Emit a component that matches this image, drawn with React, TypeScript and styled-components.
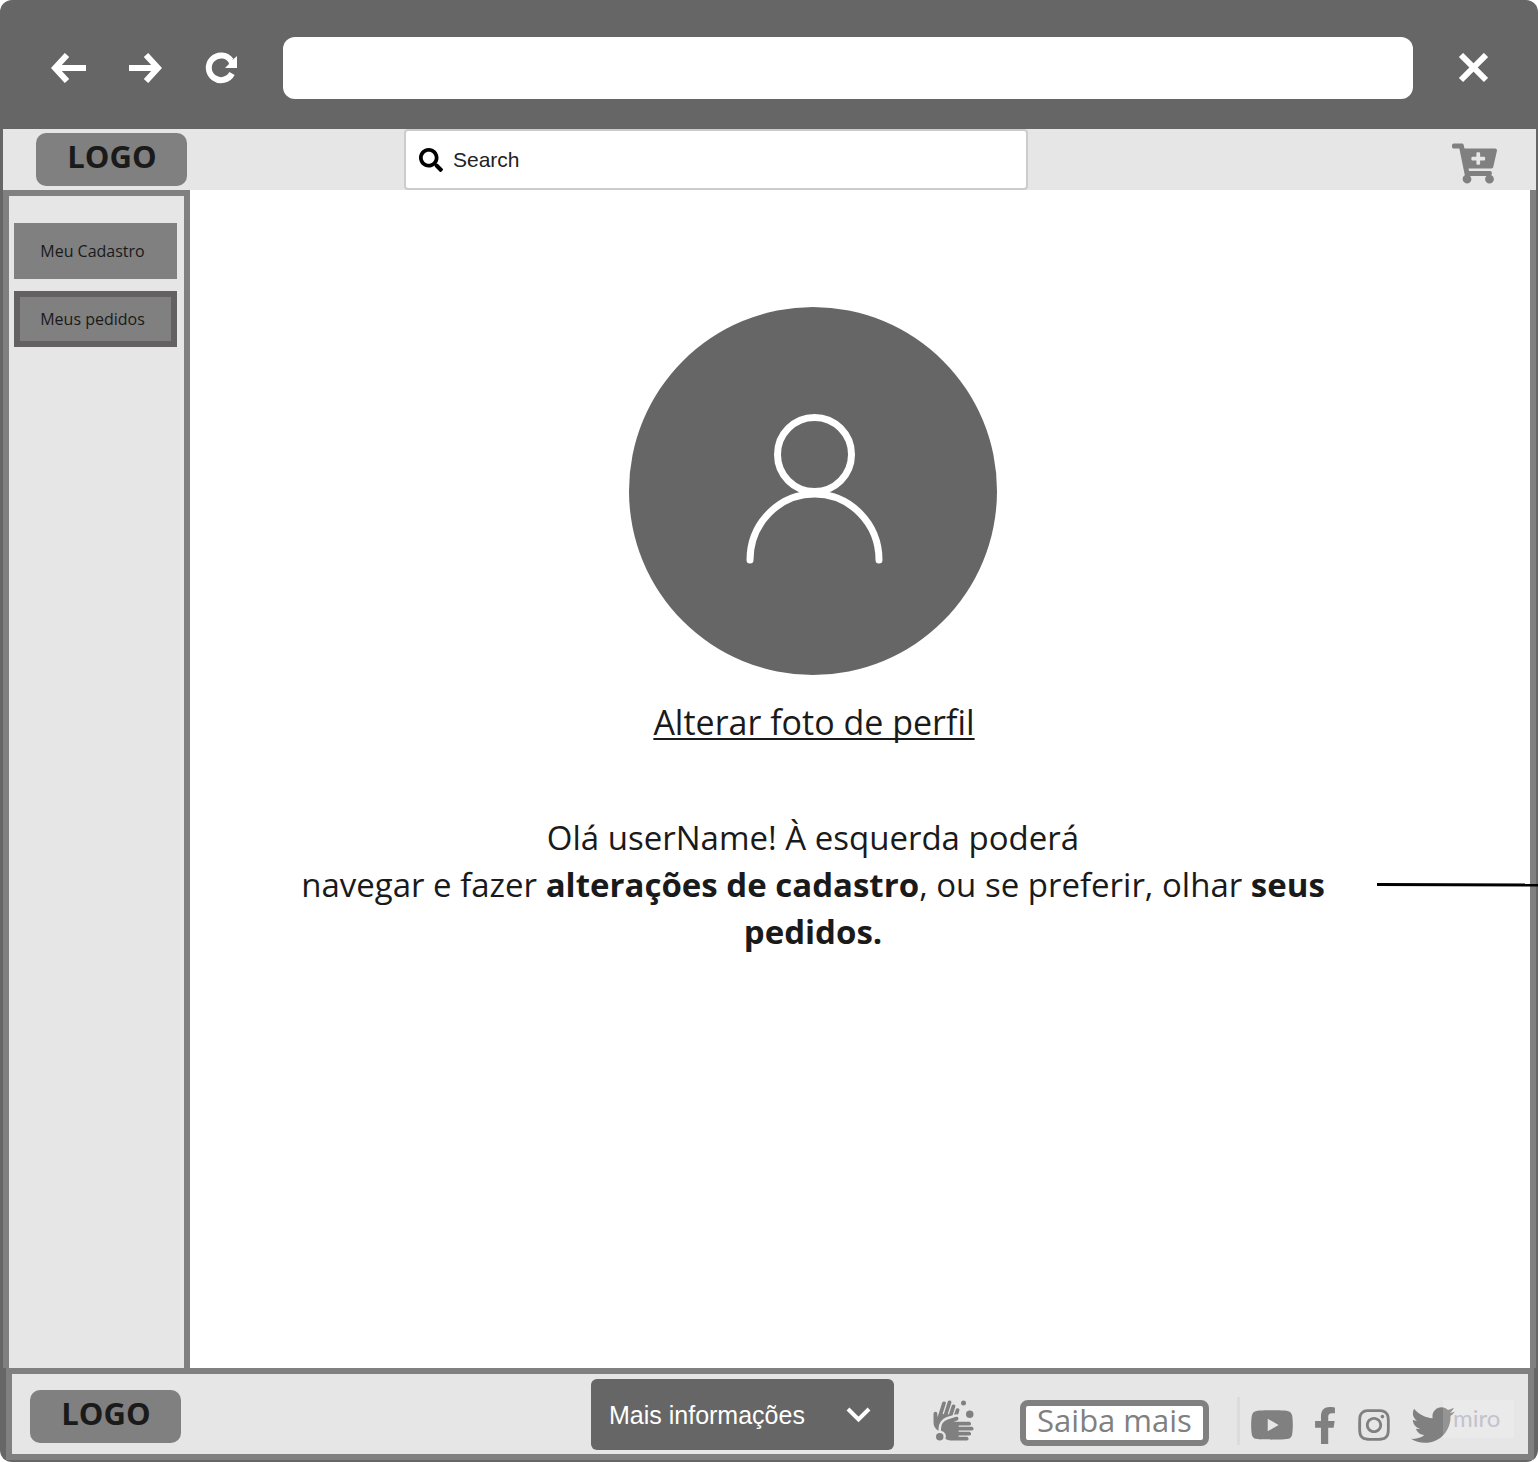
import React from 'react';
import styled, { createGlobalStyle } from 'styled-components';
import {
  FaCartPlus,
  FaFacebookF,
  FaHandsWash,
  FaInstagram,
  FaSearch,
  FaTwitter,
  FaYoutube,
} from 'react-icons/fa';

const color = {
  frame: '#666666',
  mid: '#808080',
  panel: '#e6e6e6',
  ink: '#1a1a1a',
  white: '#ffffff',
};

const openSans = "'Open Sans', 'Noto Sans', sans-serif";
const arial = "'Liberation Sans', Arial, sans-serif";

const GlobalStyle = createGlobalStyle`
  *, *::before, *::after { box-sizing: border-box; }
  body { margin: 0; background: ${color.white}; font-family: ${openSans}; color: ${color.ink}; }
  button, input, select { font: inherit; color: inherit; margin: 0; }
  button { cursor: pointer; }
  svg { display: block; flex: none; }
`;

const Frame = styled.div`
  display: flex;
  flex-direction: column;
  min-height: 100vh;
  padding: 0 2px 2px 3px;
  background: ${color.frame};
  border-radius: 12px;
  overflow: hidden;
`;

const BrowserBar = styled.div`
  display: flex;
  align-items: center;
  height: 129px;
  padding: 7px 35px 0 37px;
`;

const NavButtons = styled.div`
  display: flex;
  gap: 21px;
  margin-right: 33px;
`;

const IconButton = styled.button`
  display: flex;
  align-items: center;
  justify-content: center;
  flex: none;
  width: 56px;
  height: 56px;
  padding: 0;
  border: 0;
  background: none;
  color: ${color.white};
`;

const AddressInput = styled.input`
  flex: 1;
  min-width: 0;
  height: 62px;
  margin-right: 32px;
  padding: 0 20px;
  border: 0;
  border-radius: 12px;
  background: ${color.white};
  font-family: ${arial};
  font-size: 25px;
`;

const SiteHeader = styled.header`
  display: flex;
  align-items: center;
  height: 61px;
  padding: 0 39px 0 33px;
  background: ${color.panel};
`;

const Logo = styled.a`
  display: flex;
  align-items: center;
  justify-content: center;
  flex: none;
  width: 151px;
  height: 53px;
  padding: 0 0 8px 1px;
  border-radius: 10px;
  background: ${color.mid};
  color: ${color.ink};
  font-size: 31px;
  font-weight: 700;
  line-height: 40px;
  text-decoration: none;
`;

const SearchBox = styled.label`
  display: flex;
  align-items: center;
  gap: 10px;
  flex: 0 1 624px;
  height: 61px;
  margin: 0 auto 0 217px;
  padding: 0 13px;
  border: 2px solid #cccccc;
  border-radius: 4px;
  background: ${color.white};
  color: #000000;
`;

const SearchInput = styled.input`
  flex: 1;
  min-width: 0;
  padding: 0;
  border: 0;
  outline: 0;
  background: none;
  font-family: ${arial};
  font-size: 21px;
  line-height: 24px;
  &::placeholder { color: #222222; opacity: 1; }
`;

const CartLink = styled.a`
  margin-top: 8px;
  color: ${color.mid};
`;

const Body = styled.div`
  display: flex;
  flex: 1;
`;

const Sidebar = styled.nav`
  display: flex;
  flex-direction: column;
  gap: 12px;
  flex: none;
  width: 187px;
  padding: 27px 7px 0 5px;
  border: 6px solid ${color.mid};
  border-bottom: 0;
  background: ${color.panel};
`;

const SideButton = styled.button<{ $current?: boolean }>`
  height: 56px;
  padding: 0 6px 0 0;
  border: ${(p) => (p.$current ? '6px solid #636161' : '0')};
  background: ${color.mid};
  font-size: 16px;
`;

const Main = styled.main`
  position: relative;
  display: flex;
  flex-direction: column;
  align-items: center;
  flex: 1;
  padding: 117px 94px 40px 0;
  border-right: 6px solid ${color.mid};
  background: ${color.white};
`;

const Avatar = styled.div`
  display: flex;
  align-items: center;
  justify-content: center;
  width: 368px;
  height: 368px;
  padding: 0 0 6px 2px;
  border-radius: 50%;
  background: ${color.frame};
`;

const PhotoLink = styled.a`
  margin-top: 24px;
  padding-left: 2px;
  color: ${color.ink};
  font-size: 34px;
  line-height: 47px;
  text-decoration: underline;
  text-decoration-thickness: 2px;
  text-decoration-skip-ink: none;
  text-underline-offset: 3px;
`;

const Greeting = styled.p`
  max-width: 1060px;
  margin: 68px 0 0;
  font-size: 33px;
  line-height: 47px;
  text-align: center;
  b { font-weight: 700; }
`;

const Connector = styled.svg`
  position: absolute;
  right: -8px;
  top: 692px;
`;

const FooterEdge = styled.div`
  background: ${color.frame};
`;

const Footer = styled.footer`
  position: relative;
  display: flex;
  align-items: center;
  height: 92px;
  margin: 0 2px 0 3px;
  padding: 5px 73px 0 18px;
  border: 6px solid ${color.mid};
  background: ${color.panel};
`;

const InfoPicker = styled.label`
  display: grid;
  align-items: center;
  align-self: flex-start;
  flex: none;
  width: 303px;
  height: 71px;
  margin-left: auto;
  color: ${color.white};
  > * { grid-area: 1 / 1; }
  > svg { justify-self: end; margin-right: 23px; pointer-events: none; }
`;

const InfoSelect = styled.select`
  width: 100%;
  height: 71px;
  padding: 0 60px 0 18px;
  border: 0;
  border-radius: 6px;
  appearance: none;
  background: ${color.frame};
  font-family: ${arial};
  font-size: 25px;
`;

const HandsLink = styled.a`
  margin: 7px 44px 0 37px;
  color: ${color.mid};
`;

const MoreButton = styled.button`
  flex: none;
  width: 189px;
  height: 46px;
  margin-top: 13px;
  padding: 0 0 6px;
  border: 6px solid ${color.mid};
  border-radius: 8px;
  background: ${color.white};
  color: ${color.mid};
  font-size: 31px;
  line-height: 28px;
`;

const Socials = styled.div`
  display: flex;
  align-items: center;
  gap: 19px;
  height: 48px;
  margin: 9px 0 0 28px;
  padding: 8px 0 0 10px;
  border-left: 3px solid #dcdcda;
  color: ${color.mid};
  a { color: inherit; }
`;

const FacebookIcon = styled(FaFacebookF)`
  width: 24px;
  height: 37px;
`;

const Watermark = styled.span`
  position: absolute;
  right: 14px;
  top: 26px;
  width: 71px;
  height: 38px;
  padding-left: 10px;
  background: rgba(255, 255, 255, 0.16);
  color: #c3c2ce;
  font-family: Lato, sans-serif;
  font-size: 24px;
  line-height: 36px;
`;

const LeftArrowIcon = () => (
  <svg width="35" height="30" viewBox="0 0 35 30" fill="none" stroke="currentColor" strokeWidth="6">
    <path d="M16 2 4 15l12 13M4 15h31" />
  </svg>
);

const RightArrowIcon = () => (
  <svg width="33" height="30" viewBox="0 0 33 30" fill="none" stroke="currentColor" strokeWidth="6">
    <path d="m17 2 12 13-12 13M29 15H0" />
  </svg>
);

const ReloadIcon = () => (
  <svg width="34" height="34" viewBox="0 0 34 34">
    <path d="M27 22.5A12.3 12.3 0 1 1 26 9.5" fill="none" stroke="currentColor" strokeWidth="6" />
    <path d="M32 5V17H20l4-4-1-4 5-.5z" fill="currentColor" />
  </svg>
);

const CloseIcon = () => (
  <svg width="30" height="30" viewBox="0 0 30 30" stroke="currentColor" strokeWidth="6">
    <path d="m3 2 25 25M28 2 3 27" />
  </svg>
);

const PersonIcon = () => (
  <svg width="140" height="152" viewBox="0 0 140 152" fill="none" stroke="#ffffff" strokeWidth="7" strokeLinecap="round">
    <circle cx="70.5" cy="42.5" r="37" />
    <path d="M6 148a64.5 66 0 0 1 129 0" />
  </svg>
);

export default function App() {
  return (
    <>
      <GlobalStyle />
      <Frame>
        <BrowserBar>
          <NavButtons>
            <IconButton aria-label="Voltar"><LeftArrowIcon /></IconButton>
            <IconButton aria-label="Avançar"><RightArrowIcon /></IconButton>
            <IconButton aria-label="Recarregar"><ReloadIcon /></IconButton>
          </NavButtons>
          <AddressInput type="text" aria-label="Endereço" />
          <IconButton aria-label="Fechar"><CloseIcon /></IconButton>
        </BrowserBar>

        <SiteHeader>
          <Logo href="#">LOGO</Logo>
          <SearchBox>
            <FaSearch size={24} />
            <SearchInput type="search" placeholder="Search" aria-label="Search" />
          </SearchBox>
          <CartLink href="#" aria-label="Carrinho"><FaCartPlus size={45} /></CartLink>
        </SiteHeader>

        <Body>
          <Sidebar>
            <SideButton>Meu Cadastro</SideButton>
            <SideButton $current>Meus pedidos</SideButton>
          </Sidebar>
          <Main>
            <Avatar><PersonIcon /></Avatar>
            <PhotoLink href="#">Alterar foto de perfil</PhotoLink>
            <Greeting>
              Olá userName! À esquerda poderá<br />
              navegar e fazer <b>alterações de cadastro</b>, ou se preferir, olhar <b>seus</b><br />
              <b>pedidos.</b>
            </Greeting>
            <Connector width="161" height="5" viewBox="0 0 161 5" stroke="#000000" strokeWidth="3">
              <path d="M0 2.5 161 3" />
            </Connector>
          </Main>
        </Body>

        <FooterEdge>
          <Footer>
            <Logo href="#">LOGO</Logo>
            <InfoPicker>
              <InfoSelect aria-label="Mais informações">
                <option>Mais informações</option>
              </InfoSelect>
              <svg width="25" height="16" viewBox="0 0 25 16" fill="none" stroke="currentColor" strokeWidth="4">
                <path d="m2 2 10.5 10.5L23 2" />
              </svg>
            </InfoPicker>
            <HandsLink href="#" aria-label="Higiene das mãos"><FaHandsWash size={45} /></HandsLink>
            <MoreButton>Saiba mais</MoreButton>
            <Socials>
              <a href="#" aria-label="YouTube"><FaYoutube size={44} /></a>
              <a href="#" aria-label="Facebook"><FacebookIcon /></a>
              <a href="#" aria-label="Instagram"><FaInstagram size={36} /></a>
              <a href="#" aria-label="Twitter"><FaTwitter size={44} /></a>
            </Socials>
            <Watermark>miro</Watermark>
          </Footer>
        </FooterEdge>
      </Frame>
    </>
  );
}
